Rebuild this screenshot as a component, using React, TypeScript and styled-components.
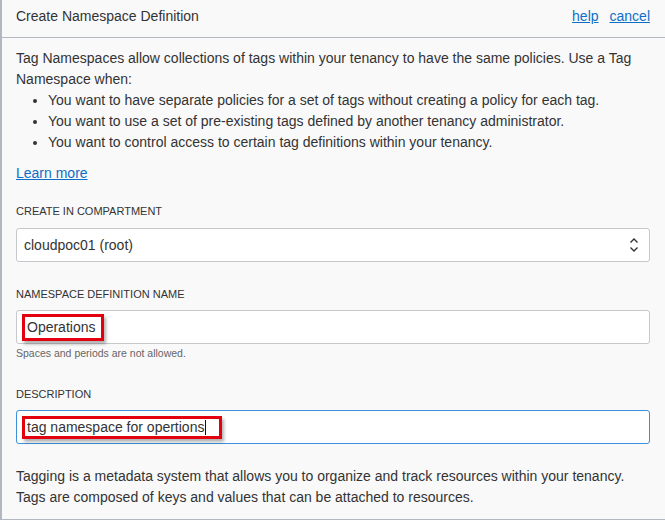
import React from "react";
import styled, { createGlobalStyle } from "styled-components";

const Global = createGlobalStyle`
  html, body { margin: 0; padding: 0; background: #f9f9fa; }
  body { font-family: "Liberation Sans", Arial, sans-serif; color: #333; }
  * { box-sizing: border-box; }
`;

const Panel = styled.div`
  width: 665px;
  height: 520px;
  background: #f9f9fa;
  border-left: 2px solid #b3b8c0;
  border-bottom: 1px solid #b3b8c0;
  display: flex;
  flex-direction: column;
`;

const Header = styled.div`
  height: 38px;
  flex: none;
  border-bottom: 1px solid #b3b8c0;
  display: flex;
  align-items: center;
  justify-content: space-between;
  padding: 0 15px 5px 14px;
`;

const Title = styled.div`
  font-size: 14px;
  color: #333;
`;

const HeaderLinks = styled.div`
  display: flex;
  gap: 11px;
`;

const Link = styled.a`
  font-size: 14px;
  color: #0f6fc6;
  text-decoration: underline;
  cursor: pointer;
`;

const Body = styled.div`
  padding: 10px 15px 0 14px;
  display: flex;
  flex-direction: column;
`;

const Text = styled.p<{ $mt?: number }>`
  margin: ${(p) => p.$mt ?? 0}px 0 0 0;
  font-size: 14px;
  line-height: 21px;
  color: #333;
`;

const List = styled.ul`
  margin: 0;
  padding-left: 32px;
  font-size: 14px;
  line-height: 21px;
  color: #333;
`;

const LinkLine = styled.div`
  margin-top: 9px;
  line-height: 21px;
`;

const Label = styled.div<{ $mt: number }>`
  margin-top: ${(p) => p.$mt}px;
  font-size: 11px;
  line-height: 14px;
  text-transform: uppercase;
  color: #333;
`;

const Field = styled.div<{ $focus?: boolean; $pl?: number; $mt: number }>`
  margin-top: ${(p) => p.$mt}px;
  height: 34px;
  background: #fff;
  border: 1px solid ${(p) => (p.$focus ? "#3b8fdb" : "#c6c8cc")};
  border-radius: 3px;
  display: flex;
  align-items: center;
  justify-content: space-between;
  padding: 0 10px 0 ${(p) => p.$pl ?? 7}px;
  font-size: 14px;
  color: #333;
`;

const Highlight = styled.span<{ $w: number; $h: number }>`
  display: inline-flex;
  align-items: center;
  width: ${(p) => p.$w}px;
  height: ${(p) => p.$h}px;
  border: 3px solid #e3000f;
  padding-left: 2px;
  box-shadow: 2px 3px 3px rgba(0, 0, 0, 0.3);
  color: #333;
  white-space: nowrap;
`;

const Caret = styled.span`
  display: inline-block;
  width: 1px;
  height: 15px;
  background: #111;
  margin-left: 1px;
`;

const Helper = styled.div`
  margin-top: 3px;
  font-size: 10.5px;
  line-height: 12px;
  color: #666;
`;

const UpDown = () => (
  <svg width="10" height="16" viewBox="0 0 10 16" fill="none">
    <path d="M1.5 5.5 L5 2 L8.5 5.5" stroke="#333" strokeWidth="1.4" />
    <path d="M1.5 10.5 L5 14 L8.5 10.5" stroke="#333" strokeWidth="1.4" />
  </svg>
);

export default function App() {
  return (
    <>
      <Global />
      <Panel>
        <Header>
          <Title>Create Namespace Definition</Title>
          <HeaderLinks>
            <Link>help</Link>
            <Link>cancel</Link>
          </HeaderLinks>
        </Header>
        <Body>
          <Text>
            Tag Namespaces allow collections of tags within your tenancy to have the same policies. Use a Tag
            Namespace when:
          </Text>
          <List>
            <li>You want to have separate policies for a set of tags without creating a policy for each tag.</li>
            <li>You want to use a set of pre-existing tags defined by another tenancy administrator.</li>
            <li>You want to control access to certain tag definitions within your tenancy.</li>
          </List>
          <LinkLine>
            <Link>Learn more</Link>
          </LinkLine>

          <Label $mt={20}>Create in compartment</Label>
          <Field $mt={10}>
            <span>cloudpoc01 (root)</span>
            <UpDown />
          </Field>

          <Label $mt={25}>Namespace definition name</Label>
          <Field $mt={9} $pl={5}>
            <Highlight $w={82} $h={27}>Operations</Highlight>
          </Field>
          <Helper>Spaces and periods are not allowed.</Helper>

          <Label $mt={28}>Description</Label>
          <Field $mt={9} $pl={5} $focus>
            <Highlight $w={200} $h={23}>
              tag namespace for opertions
              <Caret />
            </Highlight>
          </Field>

          <Text $mt={22}>
            Tagging is a metadata system that allows you to organize and track resources within your tenancy.
            <br />
            Tags are composed of keys and values that can be attached to resources.
          </Text>
        </Body>
      </Panel>
    </>
  );
}
